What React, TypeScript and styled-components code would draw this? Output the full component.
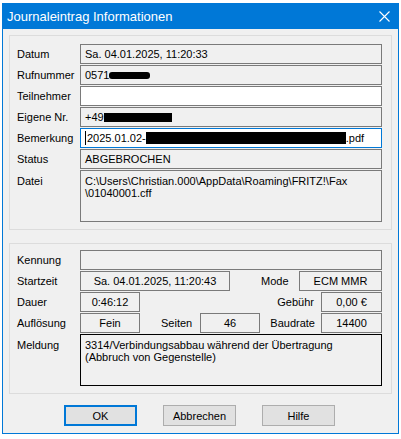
import React from "react";
import styled, { createGlobalStyle } from "styled-components";

const GlobalStyle = createGlobalStyle`
  body {
    margin: 0;
    background: #ffffff;
    font-family: "Liberation Sans", Arial, sans-serif;
    font-size: 11px;
    color: #000000;
  }
`;

const Window = styled.div`
  box-sizing: border-box;
  width: 397px;
  height: 431px;
  margin: 3px 0 0 2px;
  border: 1px solid #0078d7;
  background: #f0f0f0;
  display: flex;
  flex-direction: column;
`;

const TitleBar = styled.div`
  height: 25px;
  flex: none;
  background: #0078d7;
  color: #ffffff;
  display: flex;
  align-items: center;
  justify-content: space-between;
  padding: 0 8px 0 4px;
  font-size: 13px;
`;

const Group = styled.div<{ $mt: number; $pt: number }>`
  margin: ${(p) => p.$mt}px 6px 0;
  border: 1px solid #dcdcdc;
  padding: ${(p) => p.$pt}px 9px 7px 7px;
  display: flex;
  flex-direction: column;
  gap: 1px;
`;

const Row = styled.div<{ $top?: boolean }>`
  display: flex;
  align-items: ${(p) => (p.$top ? "flex-start" : "center")};
`;

const Label = styled.div<{ $top?: boolean }>`
  width: 63px;
  flex: none;
  white-space: nowrap;
  padding-top: ${(p) => (p.$top ? "5px" : "0")};
`;

const SideLabel = styled.div<{ $ml?: number; $mr?: number; $w?: number; $push?: boolean }>`
  flex: none;
  white-space: nowrap;
  width: ${(p) => (p.$w ? `${p.$w}px` : "auto")};
  margin-left: ${(p) => (p.$push ? "auto" : `${p.$ml ?? 0}px`)};
  margin-right: ${(p) => p.$mr ?? 0}px;
`;

type Tone = "ro" | "white" | "focus" | "black";

const borderFor = (t: Tone) =>
  t === "focus" ? "#0078d7" : t === "black" ? "#000000" : "#7a7a7a";

const Field = styled.div<{
  $tone?: Tone;
  $w?: number;
  $center?: boolean;
  $tall?: boolean;
  $push?: boolean;
}>`
  box-sizing: border-box;
  height: ${(p) => (p.$tall ? 52 : 20)}px;
  width: ${(p) => (p.$w ? `${p.$w}px` : "auto")};
  flex: ${(p) => (p.$w ? "none" : "1")};
  margin-left: ${(p) => (p.$push ? "auto" : "0")};
  border: 1px solid ${(p) => borderFor(p.$tone ?? "ro")};
  background: ${(p) => (p.$tone === "white" || p.$tone === "focus" ? "#ffffff" : "#f0f0f0")};
  display: flex;
  flex-direction: ${(p) => (p.$tall ? "column" : "row")};
  align-items: ${(p) => (p.$tall ? "flex-start" : "center")};
  justify-content: ${(p) => (p.$center ? "center" : "flex-start")};
  padding: ${(p) => (p.$tall ? "4px 4px 0" : "0 4px")};
  line-height: 12px;
  white-space: nowrap;
`;

const Redact = styled.span<{ $w: number; $h: number; $r?: number }>`
  display: inline-block;
  width: ${(p) => p.$w}px;
  height: ${(p) => p.$h}px;
  border-radius: ${(p) => p.$r ?? 0}px;
  background: #000000;
  vertical-align: middle;
`;

const Caret = styled.span`
  display: inline-block;
  width: 1px;
  height: 14px;
  margin-right: 1px;
  background: #000000;
  vertical-align: middle;
`;

const Buttons = styled.div`
  margin-top: 11px;
  display: flex;
  justify-content: center;
  gap: 26px;
  padding-right: 2px;
`;

const Button = styled.div<{ $default?: boolean }>`
  box-sizing: border-box;
  width: 73px;
  height: 21px;
  background: #e1e1e1;
  border: ${(p) => (p.$default ? "2px solid #0078d7" : "1px solid #adadad")};
  display: flex;
  align-items: center;
  justify-content: center;
`;

const CloseIcon = () => (
  <svg width="11" height="11" viewBox="0 0 11 11">
    <path d="M0.5 0.5L10.5 10.5M10.5 0.5L0.5 10.5" stroke="#ffffff" strokeWidth="1.1" />
  </svg>
);

export default function App() {
  return (
    <>
      <GlobalStyle />
      <Window>
        <TitleBar>
          <span>Journaleintrag Informationen</span>
          <CloseIcon />
        </TitleBar>

        <Group $mt={6} $pt={8}>
          <Row>
            <Label>Datum</Label>
            <Field>Sa. 04.01.2025, 11:20:33</Field>
          </Row>
          <Row>
            <Label>Rufnummer</Label>
            <Field>
              0571
              <Redact $w={41} $h={7} $r={3} />
            </Field>
          </Row>
          <Row>
            <Label>Teilnehmer</Label>
            <Field $tone="white" />
          </Row>
          <Row>
            <Label>Eigene Nr.</Label>
            <Field>
              +49
              <Redact $w={68} $h={9} />
            </Field>
          </Row>
          <Row>
            <Label>Bemerkung</Label>
            <Field $tone="focus">
              <Caret />
              2025.01.02-
              <Redact $w={200} $h={12} />
              .pdf
            </Field>
          </Row>
          <Row>
            <Label>Status</Label>
            <Field>ABGEBROCHEN</Field>
          </Row>
          <Row $top>
            <Label $top>Datei</Label>
            <Field $tall>
              <span>C:\Users\Christian.000\AppData\Roaming\FRITZ!\Fax</span>
              <span>\01040001.cff</span>
            </Field>
          </Row>
        </Group>

        <Group $mt={13} $pt={6}>
          <Row>
            <Label>Kennung</Label>
            <Field />
          </Row>
          <Row>
            <Label>Startzeit</Label>
            <Field $w={150} $center>
              Sa. 04.01.2025, 11:20:43
            </Field>
            <SideLabel $ml={31}>Mode</SideLabel>
            <Field $w={83} $center $push>
              ECM MMR
            </Field>
          </Row>
          <Row>
            <Label>Dauer</Label>
            <Field $w={60} $center>
              0:46:12
            </Field>
            <SideLabel $push $mr={7}>
              Gebühr
            </SideLabel>
            <Field $w={61} $center>
              0,00 €
            </Field>
          </Row>
          <Row>
            <Label>Auflösung</Label>
            <Field $w={60} $center>
              Fein
            </Field>
            <SideLabel $ml={21} $w={39}>
              Seiten
            </SideLabel>
            <Field $w={60} $center>
              46
            </Field>
            <SideLabel $push $mr={6}>
              Baudrate
            </SideLabel>
            <Field $w={61} $center>
              14400
            </Field>
          </Row>
          <Row $top>
            <Label $top>Meldung</Label>
            <Field $tall $tone="black">
              <span>3314/Verbindungsabbau während der Übertragung</span>
              <span>(Abbruch von Gegenstelle)</span>
            </Field>
          </Row>
        </Group>

        <Buttons>
          <Button $default>OK</Button>
          <Button>Abbrechen</Button>
          <Button>Hilfe</Button>
        </Buttons>
      </Window>
    </>
  );
}
